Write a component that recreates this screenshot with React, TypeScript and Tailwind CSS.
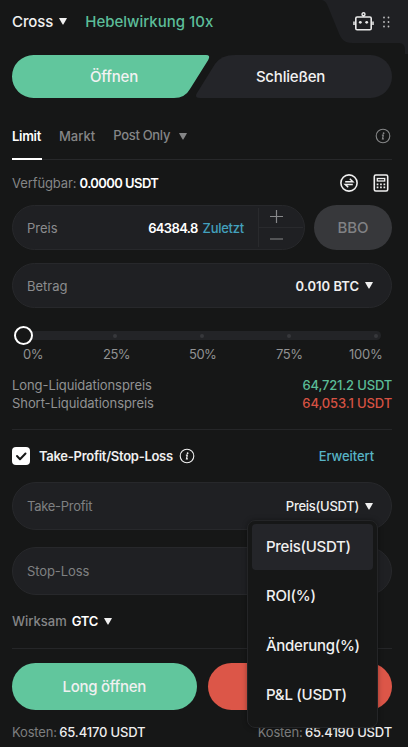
import React from "react";

function Caret({ className = "" }: { className?: string }) {
  return (
    <svg viewBox="0 0 8 7" className={`h-[7px] w-2 shrink-0 ${className}`} fill="currentColor">
      <path d="M.5 0h7q.6 0 .3.6L4.500 6.300q-.5.7-1 0L.2.600Q-.1 0 .5 0z" />
    </svg>
  );
}

function Info({ className = "" }: { className?: string }) {
  return (
    <svg viewBox="0 0 16 16" className={`size-4 shrink-0 ${className}`} fill="none" stroke="currentColor">
      <circle cx="8" cy="8" r="6.800" strokeWidth="1.100" />
      <path d="M6.900 7.200h1.400l-.8 3.600h1.400" strokeWidth="1.200" />
      <circle cx="8.600" cy="5.200" r=".9" fill="currentColor" stroke="none" />
    </svg>
  );
}

function Header() {
  return (
    <header className="relative flex h-[43px] items-center pl-3">
      <svg className="absolute top-0 right-0 h-[54px] w-[86px]" viewBox="0 0 86 54">
        <path d="M0 0c4 1 5 4 7 9l9 22c3 8 6 12 14 12h47q6 0 6 7v4h3V0z" fill="#1f2023" />
      </svg>
      <span className="text-[15px] font-medium tracking-[-0.1px] text-[#f1f1f1]">Cross</span>
      <Caret className="ml-[6px]" />
      <span className="ml-[18px] text-[15px] font-medium text-[#5cbd99]">Hebelwirkung 10x</span>
      <svg className="relative ml-auto h-5 w-[22px] text-[#eaeaea]" viewBox="0 0 22 20" fill="none" stroke="currentColor">
        <rect x="2.800" y="5" width="15.400" height="12.700" rx="1.300" strokeWidth="1.600" />
        <circle cx="10.500" cy="2.300" r="1.500" strokeWidth="1.400" />
        <path d="M10.500 3.800v1.200M1 9.500v3.500M20 9.500v3.500" strokeWidth="1.500" />
        <circle cx="7.300" cy="10.300" r="1.400" fill="currentColor" stroke="none" />
        <circle cx="13.700" cy="10.300" r="1.400" fill="currentColor" stroke="none" />
      </svg>
      <svg className="relative mr-[18px] ml-2 h-3 w-[7px]" viewBox="0 0 7 12" fill="#c0c0c1">
        <circle cx="1" cy="1.500" r=".9" />
        <circle cx="5.500" cy="1.500" r=".9" />
        <circle cx="1" cy="6" r=".9" />
        <circle cx="5.500" cy="6" r=".9" />
        <circle cx="1" cy="10.500" r=".9" />
        <circle cx="5.500" cy="10.500" r=".9" />
      </svg>
    </header>
  );
}

function SideTabs() {
  return (
    <div className="relative mt-3 grid h-[43px] grid-cols-[204px_149px] items-center text-center text-[15px] font-medium tracking-[-0.2px] text-[#f2f2f2]">
      <svg className="absolute inset-0 h-[43px] w-[380px]" viewBox="0 0 380 43">
        <path d="M21.500 0H194q5 0 2.200 5L178 34q-5 9-16 9H21.500a21.500 21.500 0 0 1 0-43z" fill="#61c69d" />
        <path d="M223 0h135.500a21.500 21.500 0 0 1 0 43H188q-6 0-3-5l18-29q6-9 20-9z" fill="#242529" />
      </svg>
      <span className="relative">Öffnen</span>
      <span className="relative">Schließen</span>
    </div>
  );
}

function Slider() {
  return (
    <div className="mt-[18px]">
      <div className="flex h-[19px] items-center pl-[2px]">
        <div className="z-10 size-[19px] shrink-0 rounded-full border-[2.500px] border-white bg-[#161717]" />
        <div className="-ml-[10px] flex h-[9px] w-[358px] items-center justify-between rounded-full bg-[#232427] pr-[3px] pl-[3px]">
          <i className="size-1" />
          <i className="size-1 rounded-full bg-[#37383b]" />
          <i className="size-1 rounded-full bg-[#37383b]" />
          <i className="size-1 rounded-full bg-[#37383b]" />
          <i className="size-1 rounded-full bg-[#37383b]" />
        </div>
      </div>
      <div className="flex h-[18px] items-center pl-[11px] text-[13px] tracking-[-0.5px] text-[#919293]">
        <span className="w-[80px]">0%</span>
        <span className="w-[86px]">25%</span>
        <span className="w-[87px]">50%</span>
        <span className="w-[73px]">75%</span>
        <span className="tracking-[-0.2px]">100%</span>
      </div>
    </div>
  );
}

function Cost({ value }: { value: string }) {
  return (
    <span className="text-[13px] tracking-[-0.17px] text-[#7d7e7f]">
      Kosten: <b className="-ml-px font-medium text-[#eeeeee]">{value} USDT</b>
    </span>
  );
}

const units = ["Preis(USDT)", "ROI(%)", "Änderung(%)", "P&L (USDT)"];

function UnitMenu() {
  return (
    <div className="absolute top-[520px] left-[247px] z-20 h-[208px] w-[131px] rounded-[8px] border border-[#242527] bg-[#161717] px-1 pt-[3px] text-[15px] font-medium tracking-[-0.27px] text-[#f0f0f0] shadow-[0_0_5px_rgba(0,0,0,0.35)]">
      {units.map((unit, i) => (
        <div
          key={unit}
          className={`mb-[3.400px] flex h-[46px] items-center rounded-[4px] pl-[14px] ${i === 0 ? "bg-[#242529]" : ""}`}
        >
          {unit}
        </div>
      ))}
    </div>
  );
}

export default function App() {
  return (
    <div className="relative h-[747px] w-[408px] overflow-hidden bg-[#161717] font-['Inter','Liberation_Sans',sans-serif] text-[13px] leading-[18px] text-[#f0f0f0]">
      <Header />
      <main className="pr-4 pl-3">
        <SideTabs />
        <nav className="mt-4 flex h-[46px] border-b border-[#27282a] font-medium text-[#858687]">
          <span className="flex h-[46px] w-[30px] shrink-0 border-b-2 border-white pt-[13px] font-semibold tracking-[-0.3px] whitespace-nowrap text-white">Limit</span>
          <span className="ml-[17px] pt-[13px]">Markt</span>
          <span className="ml-[18px] pt-3 tracking-[-0.3px]">Post Only</span>
          <Caret className="mt-[19px] ml-[9px]" />
          <Info className="mt-[14px] mr-px ml-auto" />
        </nav>

        <div className="mt-[11px] flex h-[24px] items-center">
          <span className="tracking-[-0.1px] text-[#858687]">Verfügbar:</span>
          <b className="ml-[3px] font-semibold tracking-[-0.57px] text-white">0.0000 USDT</b>
          <svg className="ml-auto size-[18px]" viewBox="0 0 18 18" fill="none" stroke="currentColor" strokeWidth="1.600">
            <circle cx="9" cy="9" r="8.100" />
            <path d="M5.200 7.700h7.600L9.800 4.800M12.800 10.400H5.200l3 2.900" strokeWidth="1.500" />
          </svg>
          <svg className="mr-[3px] ml-[15px] h-[18px] w-4" viewBox="0 0 16 18" fill="none" stroke="currentColor" strokeWidth="1.600">
            <rect x="1.300" y="1" width="13.400" height="16" rx="1.500" />
            <rect x="4.300" y="4.500" width="7.400" height="2.500" strokeWidth="1.300" />
            <path d="M3.700 10.300h9M3.700 13.400h9" strokeWidth="1.700" strokeDasharray="1.700" />
          </svg>
        </div>

        <div className="mt-[10px] flex h-[45px] gap-[9px]">
          <div className="flex w-[293px] items-center rounded-full border border-[#27282b] bg-[#1f2023] pl-[14px]">
            <span className="text-[#8b8c8e]">Preis</span>
            <span className="ml-auto font-semibold tracking-[-0.65px] text-white">64384.8</span>
            <span className="ml-[5px] font-medium tracking-[-0.25px] text-[#43a0be]">Zuletzt</span>
            <svg className="ml-[13px] h-[43px] w-[47px]" viewBox="0 0 47 43" fill="none">
              <path d="M1.500 2v39M2 21.500h44" stroke="#292a2d" />
              <path d="M13 10.500h13M19.500 4v13M13 33h13" stroke="#87888a" strokeWidth="1.200" />
            </svg>
          </div>
          <button className="w-[78px] rounded-full bg-[#37383b] text-[15px] font-medium text-[#818285]">BBO</button>
        </div>

        <div className="mt-[13px] flex h-[45px] items-center rounded-full border border-[#27282b] bg-[#1f2023] pr-[18px] pl-[14px]">
          <span className="text-[#8b8c8e]">Betrag</span>
          <span className="ml-auto font-semibold">0.010 BTC</span>
          <Caret className="ml-[6px]" />
        </div>

        <Slider />

        <div className="mt-[13px] flex justify-between">
          <span className="tracking-[-0.07px] text-[#919293]">Long-Liquidationspreis</span>
          <span className="font-medium tracking-[-0.18px] text-[#5bbd98]">64,721.2 USDT</span>
        </div>
        <div className="flex justify-between">
          <span className="tracking-[-0.07px] text-[#919293]">Short-Liquidationspreis</span>
          <span className="font-medium tracking-[-0.13px] text-[#d65243]">64,053.1 USDT</span>
        </div>

        <div className="mt-[17px] flex h-[53px] items-center border-t border-[#252628]">
          <svg className="size-[18px]" viewBox="0 0 18 18" fill="none">
            <rect width="18" height="18" rx="4" fill="white" />
            <path d="m5 9 3 3.200 5.500-5.700" stroke="#161717" strokeWidth="2" strokeLinecap="round" strokeLinejoin="round" />
          </svg>
          <b className="ml-[9px] font-semibold tracking-[-0.28px]">Take-Profit/Stop-Loss</b>
          <Info className="ml-[6px]" />
          <span className="mr-[18px] ml-auto font-medium tracking-[-0.1px] text-[#57b4c6]">Erweitert</span>
        </div>

        <div className="flex h-12 items-center rounded-full border border-[#27282b] bg-[#1f2023] pr-[18px] pl-[14px]">
          <span className="tracking-[-0.27px] text-[#7f8082]">Take-Profit</span>
          <span className="ml-auto font-medium tracking-[-0.27px]">Preis(USDT)</span>
          <Caret className="ml-[6px]" />
        </div>
        <div className="mt-[17px] flex h-12 items-center rounded-full border border-[#27282b] bg-[#1f2023] pl-[14px]">
          <span className="tracking-[-0.1px] text-[#7f8082]">Stop-Loss</span>
        </div>

        <div className="mt-4 flex h-5 items-center">
          <span className="font-medium text-[#858687]">Wirksam</span>
          <b className="ml-[5px] font-semibold tracking-[-0.3px] text-white">GTC</b>
          <Caret className="ml-[6px]" />
        </div>

        <div className="mt-[17px] border-t border-[#252628]" />
        <div className="mt-[14px] grid h-[47px] grid-cols-2 gap-[11px]">
          <button className="rounded-full bg-[#61c69d] text-[15px] font-medium tracking-[-0.3px]">Long öffnen</button>
          <button className="rounded-full bg-[#dc5648]" />
        </div>
        <div className="mt-[13px] flex justify-between">
          <Cost value="65.4170" />
          <Cost value="65.4190" />
        </div>
      </main>
      <UnitMenu />
    </div>
  );
}
